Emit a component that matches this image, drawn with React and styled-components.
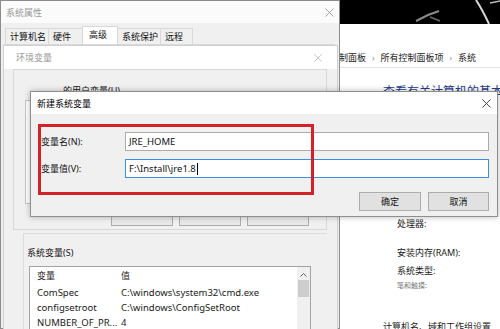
import styled, { createGlobalStyle } from 'styled-components'

const GlobalStyle = createGlobalStyle`
  html, body { margin: 0; padding: 0; background: #000; overflow: hidden; }
  * { box-sizing: border-box; }
`

const Desktop = styled.div`
  position: relative;
  width: 500px;
  height: 329px;
  overflow: hidden;
  background: #000;
  font-family: "Noto Sans", "Noto Sans CJK SC", sans-serif;
  font-size: 9px;
  color: #141414;
`

const Wallpaper = styled.svg`
  position: absolute;
  left: 300px;
  top: 0;
`

/* control panel behind everything */
const ControlPanel = styled.div`
  position: absolute;
  left: 300px;
  top: 24px;
  right: 0;
  bottom: 0;
  background: #fff;
  display: flex;
  flex-direction: column;
  overflow: hidden;
  & > * { flex: none; }
`

const Breadcrumb = styled.div`
  margin-top: 23px;
  height: 21px;
  border-bottom: 1px solid #e4e4e4;
  display: flex;
  align-items: center;
  padding-left: 30px;
  white-space: nowrap;
  color: #222;
`

const Sep = styled.span`
  margin: 0 6px;
  color: #888;
  font-size: 8px;
`

const Heading = styled.div`
  margin-top: 16px;
  padding-left: 83px;
  font-size: 12px;
  line-height: 16px;
  color: #1f3a8f;
  white-space: nowrap;
`

const InfoRow = styled.div`
  margin-top: ${({ $gap }) => $gap}px;
  padding-left: ${({ $indent }) => $indent || 97}px;
  line-height: 14px;
  white-space: nowrap;
  color: ${({ $faint }) => ($faint ? '#777' : '#1a1a1a')};
  font-size: ${({ $small }) => ($small ? '7px' : '9px')};
`

/* generic window chrome */
const Window = styled.div`
  position: absolute;
  left: ${({ $x }) => $x}px;
  top: ${({ $y }) => $y}px;
  width: ${({ $w }) => $w}px;
  height: ${({ $h }) => $h}px;
  background: #f0f0f0;
  display: flex;
  flex-direction: column;
  border: ${({ $border }) => $border || 'none'};
  box-shadow: ${({ $shadow }) => ($shadow ? '0 0 6px rgba(0,0,0,0.28)' : 'none')};
`

const TitleBar = styled.div`
  height: ${({ $h }) => $h}px;
  flex: none;
  background: ${({ $bg }) => $bg || '#fff'};
  display: flex;
  align-items: center;
  justify-content: space-between;
  padding: 0 ${({ $pr }) => $pr}px 0 ${({ $pl }) => $pl}px;
  color: ${({ $active }) => ($active ? '#000' : '#9a9a9a')};
  font-size: ${({ $fs }) => $fs || 9}px;
`

const CloseIcon = ({ color = '#888', size = 9 }) => (
  <svg width={size} height={size} viewBox="0 0 10 10">
    <path d="M0.5 0.5 L9.5 9.5 M9.5 0.5 L0.5 9.5" stroke={color} strokeWidth="1" fill="none" />
  </svg>
)

/* system properties */
const TabStrip = styled.div`
  height: 21px;
  flex: none;
  display: flex;
  align-items: flex-end;
  padding-left: 5px;
`

const Tab = styled.div`
  width: ${({ $w }) => $w}px;
  height: ${({ $sel }) => ($sel ? 18 : 16)}px;
  padding-left: ${({ $sel }) => ($sel ? 6 : 4)}px;
  background: ${({ $sel }) => ($sel ? '#fff' : '#f0f0f0')};
  border: 1px solid #d9d9d9;
  border-bottom: none;
  margin-left: -1px;
  line-height: 15px;
  white-space: nowrap;
  color: #111;
`

const TabPage = styled.div`
  flex: 1;
  margin: 0 4px 4px 3px;
  background: #fff;
  border: 1px solid #d9d9d9;
`

/* environment variables */
const UserGroup = styled.div`
  margin: 0 10px 0 9px;
  height: 161px;
  flex: none;
  border: 1px solid #d7d7d7;
  display: flex;
  flex-direction: column;
`

const GroupLabel = styled.div`
  padding: ${({ $pt }) => $pt}px 0 0 ${({ $pl }) => $pl}px;
  line-height: 12px;
  white-space: nowrap;
`

const UserList = styled.div`
  margin: 3px 16px 0 11px;
  height: 104px;
  border: 1px solid #c4c4c4;
  background: #fff;
`

const ButtonRow = styled.div`
  display: flex;
  justify-content: flex-end;
  gap: ${({ $gap }) => $gap || 7}px;
  padding-right: ${({ $pr }) => $pr}px;
  margin-top: ${({ $mt }) => $mt}px;
`

const Button = styled.div`
  width: ${({ $w }) => $w || 62}px;
  height: ${({ $h }) => $h || 19}px;
  background: ${({ $soft }) => ($soft ? '#e8e8e8' : '#e1e1e1')};
  border: 1px solid #adadad;
  display: flex;
  align-items: center;
  justify-content: center;
  color: #111;
`

const SysGroup = styled.div`
  margin: 3px 10px 0 19px;
  flex: 1;
  border-top: 1px solid #dcdcdc;
  border-left: 1px solid #dcdcdc;
  display: flex;
  flex-direction: column;
`

const ListView = styled.div`
  margin: 7px 16px 0 5px;
  flex: 1;
  background: #fff;
  border: 1px solid #a3a3a3;
  display: flex;
`

const ListBody = styled.div`
  flex: 1;
  font-size: 9.5px;
`

const ListRow = styled.div`
  display: grid;
  grid-template-columns: 84px 1fr;
  padding-left: 7px;
  height: ${({ $head }) => ($head ? 18 : 15)}px;
  line-height: ${({ $head }) => ($head ? 18 : 15)}px;
  white-space: nowrap;
  color: #1a1a1a;
  font-size: ${({ $head }) => ($head ? '9px' : 'inherit')};
`

const ScrollBar = styled.div`
  width: 13px;
  background: #f0f0f0;
  display: flex;
  flex-direction: column;
  align-items: center;
  padding-top: 5px;
`

const Thumb = styled.div`
  margin-top: 3px;
  width: 11px;
  height: 17px;
  background: #cdcdcd;
`

/* new variable dialog */
const DialogBody = styled.div`
  flex: 1;
  padding: 18px 8px 0 10px;
`

const FieldRow = styled.div`
  display: grid;
  grid-template-columns: 84px 1fr;
  align-items: center;
  height: 19px;
  margin-top: ${({ $mt }) => $mt || 0}px;
  font-size: 9px;
`

const Input = styled.div`
  height: 19px;
  background: #fff;
  border: 1px solid ${({ $focus }) => ($focus ? '#3d8ee0' : '#ababab')};
  padding-left: 3px;
  display: flex;
  align-items: center;
  font-size: 9.5px;
  color: #111;
  white-space: nowrap;
`

const Caret = styled.span`
  display: inline-block;
  width: 1px;
  height: 12px;
  background: #000;
  margin-left: 1px;
`

/* red annotation drawn over the dialog */
const Highlight = styled.div`
  position: absolute;
  left: 7px;
  top: 32px;
  width: 276px;
  height: 71px;
  border: 3px solid #d5212a;
  pointer-events: none;
`

export default function App() {
  return (
    <>
      <GlobalStyle />
      <Desktop>
        <Wallpaper width="200" height="24" viewBox="0 0 200 24">
          <path d="M176 0 Q182 9 189 24" stroke="#d8d8d8" strokeWidth="2" fill="none" />
          <path d="M116 21 L128 15 L139 11" stroke="#8a8a8a" strokeWidth="2" fill="none" />
          <path d="M130 17 L140 21" stroke="#6a6a6a" strokeWidth="1.5" fill="none" />
          <path d="M190 3 L200 1" stroke="#bbb" strokeWidth="1.5" fill="none" />
        </Wallpaper>

        <ControlPanel>
          <Breadcrumb>
            <span>控制面板</span>
            <Sep>›</Sep>
            <span>所有控制面板项</span>
            <Sep>›</Sep>
            <span>系统</span>
          </Breadcrumb>
          <Heading>查看有关计算机的基本信息</Heading>
          <InfoRow $gap={117}>处理器:</InfoRow>
          <InfoRow $gap={15}>安装内存(RAM):</InfoRow>
          <InfoRow $gap={4}>系统类型:</InfoRow>
          <InfoRow $gap={1} $small $faint>笔和触摸:</InfoRow>
          <InfoRow $gap={27} $indent={83}>计算机名、域和工作组设置</InfoRow>
        </ControlPanel>

        <Window $x={0} $y={0} $w={340} $h={329} $border="1px solid #8c8c8c">
          <TitleBar $h={22} $pl={5} $pr={5} $bg="#fbfbfb">
            <span>系统属性</span>
            <CloseIcon color="#9a9a9a" />
          </TitleBar>
          <TabStrip>
            <Tab $w={44}>计算机名</Tab>
            <Tab $w={35}>硬件</Tab>
            <Tab $w={36} $sel>高级</Tab>
            <Tab $w={44}>系统保护</Tab>
            <Tab $w={33}>远程</Tab>
          </TabStrip>
          <TabPage />
        </Window>

        <Window $x={3} $y={45} $w={335} $h={300} $border="1px solid #d0d0d0">
          <TitleBar $h={23} $pl={12} $pr={15}>
            <span>环境变量</span>
            <CloseIcon color="#b5b5b5" size={8} />
          </TitleBar>
          <UserGroup>
            <GroupLabel $pt={15} $pl={49}>的用户变量(U)</GroupLabel>
            <UserList />
            <ButtonRow $pr={17} $mt={2} $gap={6}>
              <Button $h={20} $soft />
              <Button $h={20} $soft />
              <Button $h={20} $soft />
            </ButtonRow>
          </UserGroup>
          <SysGroup>
            <GroupLabel $pt={13} $pl={3}>系统变量(S)</GroupLabel>
            <ListView>
              <ListBody>
                <ListRow $head>
                  <span>变量</span>
                  <span>值</span>
                </ListRow>
                <ListRow>
                  <span>ComSpec</span>
                  <span>C:\windows\system32\cmd.exe</span>
                </ListRow>
                <ListRow>
                  <span>configsetroot</span>
                  <span>C:\windows\ConfigSetRoot</span>
                </ListRow>
                <ListRow>
                  <span>NUMBER_OF_PR...</span>
                  <span>4</span>
                </ListRow>
              </ListBody>
              <ScrollBar>
                <svg width="7" height="5" viewBox="0 0 7 5">
                  <path d="M0.5 4.5 L3.5 1.5 L6.5 4.5" stroke="#606060" strokeWidth="1" fill="none" />
                </svg>
                <Thumb />
              </ScrollBar>
            </ListView>
          </SysGroup>
        </Window>

        <Window $x={30} $y={91} $w={468} $h={126} $border="1px solid #8f8f8f" $shadow>
          <TitleBar $h={22} $pl={6} $pr={6} $active $fs={9}>
            <span>新建系统变量</span>
            <CloseIcon color="#333" />
          </TitleBar>
          <DialogBody>
            <FieldRow>
              <span>变量名(N):</span>
              <Input>JRE_HOME</Input>
            </FieldRow>
            <FieldRow $mt={8}>
              <span>变量值(V):</span>
              <Input $focus>
                F:\Install\jre1.8
                <Caret />
              </Input>
            </FieldRow>
            <ButtonRow $pr={0} $mt={14} $gap={7}>
              <Button>确定</Button>
              <Button $w={61}>取消</Button>
            </ButtonRow>
          </DialogBody>
          <Highlight />
        </Window>
      </Desktop>
    </>
  )
}
